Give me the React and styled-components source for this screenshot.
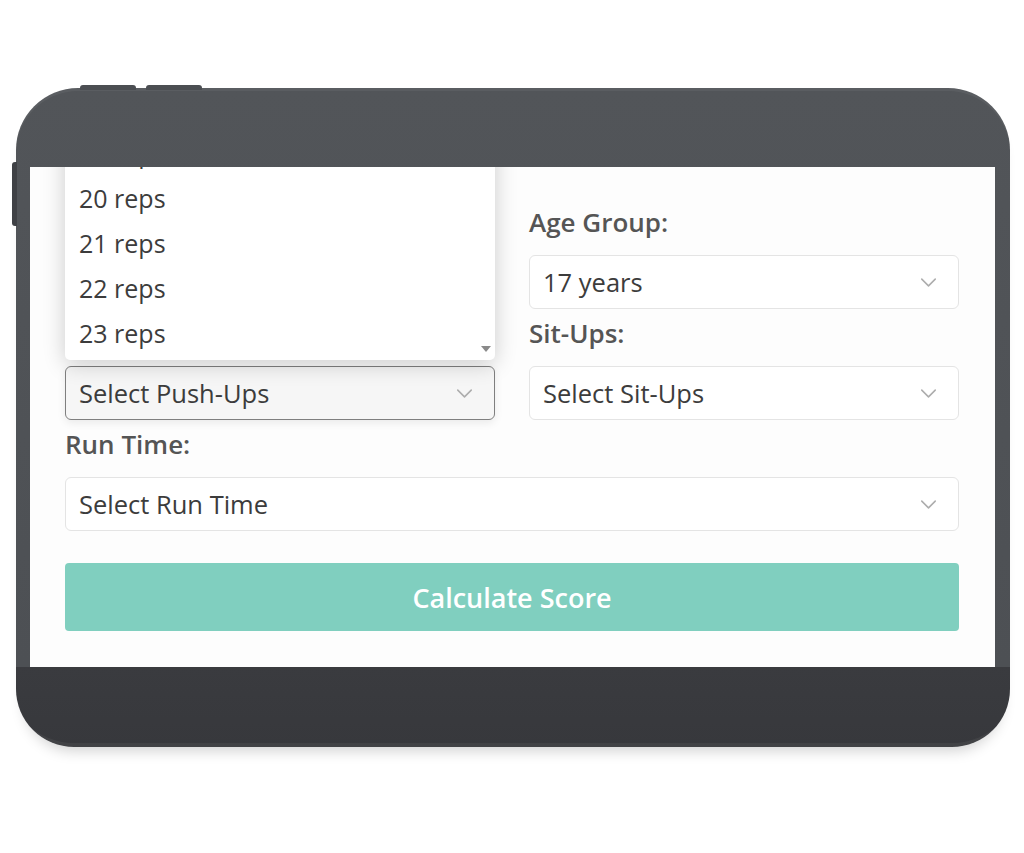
import styled, { createGlobalStyle, css } from "styled-components"
import { ChevronDown } from "lucide-react"

const GlobalStyle = createGlobalStyle`
	html, body {
		margin: 0;
		padding: 0;
		background: #ffffff;
	}
	body {
		font-family: "Open Sans", "Noto Sans", sans-serif;
		width: 1024px;
		height: 853px;
		overflow: hidden;
	}
`

const repOptions = [19, 20, 21, 22, 23]

export default function App() {
	return (
		<>
			<GlobalStyle />
			<Page>
				<Device>
					<TopKey $left={64} />
					<TopKey $left={130} />
					<SideKey />
					<Screen>
						<FieldGrid>
							<Field>
								<Label>Gender:</Label>
								<SelectBox>
									Male
									<Chevron />
								</SelectBox>
							</Field>
							<Field>
								<Label>Age Group:</Label>
								<SelectBox>
									17 years
									<Chevron />
								</SelectBox>
							</Field>
							<Field>
								<Label>Push-Ups:</Label>
								<SelectWrap>
									<OptionList>
										{repOptions.map((n) => (
											<Option key={n}>{n} reps</Option>
										))}
										<ScrollArrow />
									</OptionList>
									<SelectBox $open>
										Select Push-Ups
										<Chevron />
									</SelectBox>
								</SelectWrap>
							</Field>
							<Field>
								<Label>Sit-Ups:</Label>
								<SelectBox>
									Select Sit-Ups
									<Chevron />
								</SelectBox>
							</Field>
							<Field $wide>
								<Label>Run Time:</Label>
								<SelectBox>
									Select Run Time
									<Chevron />
								</SelectBox>
							</Field>
						</FieldGrid>
						<SubmitButton>Calculate Score</SubmitButton>
					</Screen>
				</Device>
			</Page>
		</>
	)
}

function Chevron() {
	return (
		<ChevronIcon>
			<ChevronDown size={27} strokeWidth={1.4} color="#adadad" />
		</ChevronIcon>
	)
}

const Page = styled.div`
	width: 1024px;
	height: 853px;
	padding-top: 88px;
	padding-left: 16px;
	box-sizing: border-box;
`

const Device = styled.div`
	position: relative;
	width: 994px;
	height: 659px;
	box-sizing: border-box;
	padding: 79px 15px 80px 14px;
	border-radius: 62px 62px 58px 58px;
	background: linear-gradient(to bottom, #525559 0%, #4d5054 87.8%, #3a3b3f 87.8%, #37383c 100%);
	box-shadow:
		inset 0 3px 0 rgba(255, 255, 255, 0.05),
		inset 0 -14px 0 -10px rgba(255, 255, 255, 0.05),
		0 12px 14px -8px rgba(0, 0, 0, 0.18);
`

const TopKey = styled.span`
	position: absolute;
	top: -3px;
	left: ${(p) => p.$left}px;
	width: 56px;
	height: 5px;
	border-radius: 3px 3px 0 0;
	background: #4b4e52;
`

const SideKey = styled.span`
	position: absolute;
	left: -4px;
	top: 74px;
	width: 5px;
	height: 64px;
	border-radius: 3px 0 0 3px;
	background: #3f4145;
`

const Screen = styled.div`
	position: relative;
	height: 500px;
	box-sizing: border-box;
	padding: 40px 36px 0 35px;
	background: #fdfdfd;
	overflow: hidden;
`

const FieldGrid = styled.div`
	display: grid;
	grid-template-columns: 1fr 1fr;
	column-gap: 34px;
	row-gap: 9px;
`

const Field = styled.div`
	display: flex;
	flex-direction: column;
	${(p) =>
		p.$wide &&
		css`
			grid-column: 1 / -1;
		`}
`

const Label = styled.label`
	font-size: 26px;
	line-height: 30px;
	font-weight: 600;
	color: #555555;
	margin-bottom: 18px;
`

const SelectWrap = styled.div`
	position: relative;
`

const SelectBox = styled.div`
	height: 54px;
	box-sizing: border-box;
	display: flex;
	align-items: center;
	justify-content: space-between;
	padding: 0 16px 0 13px;
	border: 1px solid #e4e4e4;
	border-radius: 6px;
	background: #ffffff;
	font-size: 25.5px;
	color: #3c3c3c;

	${(p) =>
		p.$open &&
		css`
			border-color: #7f7f7f;
			background: #f6f6f6;
			box-shadow: 0 3px 8px rgba(0, 0, 0, 0.08);
		`}
`

const ChevronIcon = styled.span`
	display: flex;
	align-items: center;
	line-height: 0;
`

const OptionList = styled.div`
	position: absolute;
	left: 0;
	right: 0;
	bottom: calc(100% + 6px);
	padding-bottom: 5px;
	background: #ffffff;
	border-radius: 0 0 5px 5px;
	box-shadow: 0 4px 22px rgba(0, 0, 0, 0.2);
`

const Option = styled.div`
	height: 45px;
	display: flex;
	align-items: center;
	padding-left: 14px;
	font-size: 25px;
	color: #3c3c3c;
`

const ScrollArrow = styled.span`
	position: absolute;
	right: 4px;
	bottom: 8px;
	width: 0;
	height: 0;
	border-left: 5px solid transparent;
	border-right: 5px solid transparent;
	border-top: 6px solid #8a8a8a;
`

const SubmitButton = styled.button`
	display: block;
	width: 100%;
	height: 68px;
	margin-top: 32px;
	border: none;
	border-radius: 4px;
	background: #80cfbf;
	color: #ffffff;
	font-family: inherit;
	font-size: 27px;
	font-weight: 600;
	cursor: pointer;
`
